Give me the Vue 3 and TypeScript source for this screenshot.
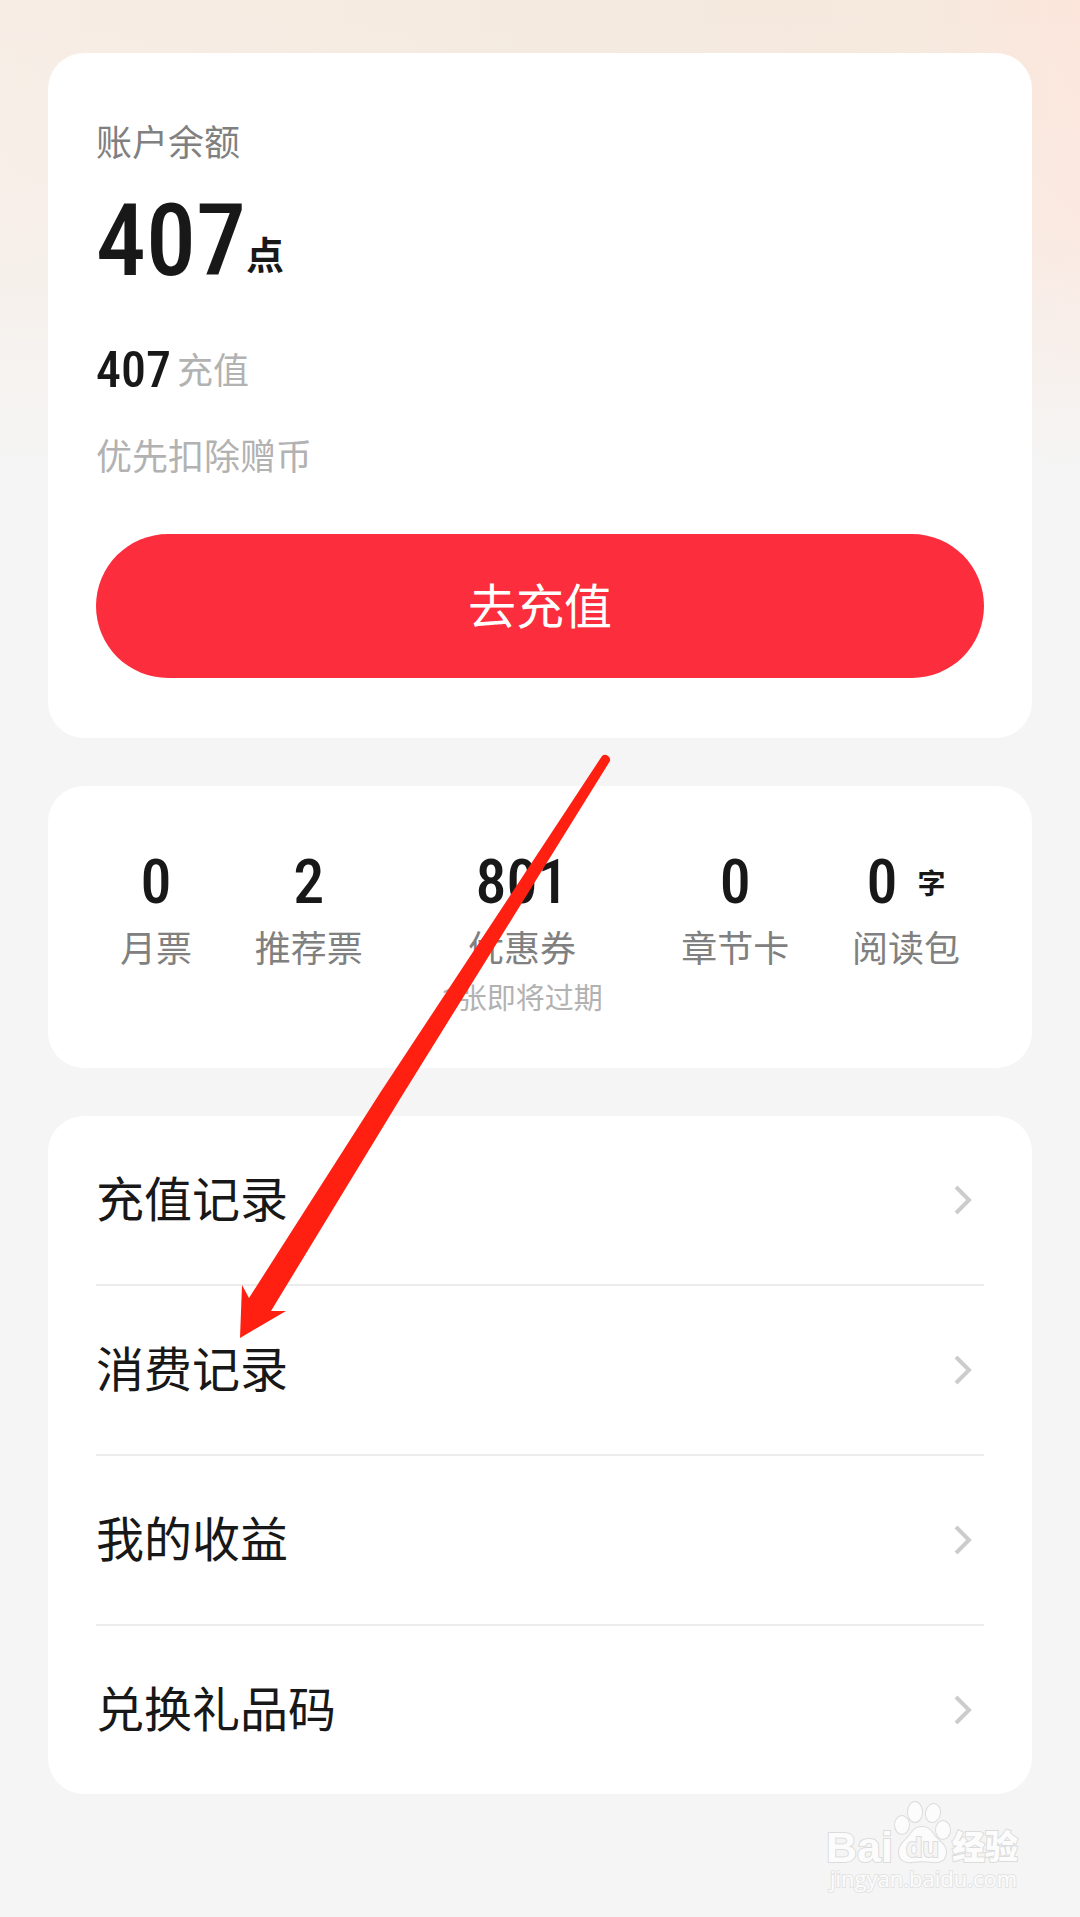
<script setup lang="ts">
interface Stat {
  value: string
  label: string
  unit?: string
  note?: string
}

const stats: Stat[] = [
  { value: '0', label: '月票' },
  { value: '2', label: '推荐票' },
  { value: '801', label: '优惠券', note: '1张即将过期' },
  { value: '0', label: '章节卡' },
  { value: '0', label: '阅读包', unit: '字' },
]

const links: string[] = ['充值记录', '消费记录', '我的收益', '兑换礼品码']
</script>

<template>
  <main class="page">
    <section class="card balance">
      <h1 class="caption">账户余额</h1>
      <p class="total"><span class="num">407</span><span class="unit">点</span></p>
      <p class="detail"><span class="num">407</span><span class="kind">充值</span></p>
      <p class="hint">优先扣除赠币</p>
      <button class="recharge" type="button">去充值</button>
    </section>

    <ul class="card stats">
      <li v-for="s in stats" :key="s.label" class="stat" :class="{ wide: s.note }">
        <span class="stat-value">
          <span class="num">{{ s.value }}</span>
          <span v-if="s.unit" class="stat-unit">{{ s.unit }}</span>
        </span>
        <span class="stat-label">{{ s.label }}</span>
        <span v-if="s.note" class="stat-note">{{ s.note }}</span>
      </li>
    </ul>

    <nav class="card menu">
      <a v-for="l in links" :key="l" class="row" href="#">
        <span class="row-label">{{ l }}</span>
        <svg class="chevron" viewBox="0 0 20 32" aria-hidden="true">
          <path d="M2 3 L15 16 L2 29" />
        </svg>
      </a>
    </nav>

    <svg class="watermark" viewBox="0 0 200 100" aria-label="Baidu 经验">
      <g class="shape">
        <ellipse cx="78" cy="27" rx="7" ry="9" />
        <ellipse cx="91" cy="14" rx="7" ry="10" />
        <ellipse cx="109" cy="15" rx="7" ry="9" transform="rotate(12 109 15)" />
        <ellipse cx="119" cy="32" rx="7" ry="9" />
        <path d="M98 29 C104 29 107 32 110 37 C114 43 122 46 122 54 C122 62 116 65 109 64 C102 63 95 63 88 64 C80 65 75 61 75 54 C75 46 82 42 86 37 C89 32 92 29 98 29 Z" />
      </g>
      <text class="brand" x="2" y="64">Bai</text>
      <text class="du" x="82" y="59">du</text>
      <text class="name" x="128" y="61">经验</text>
      <text class="site" x="6" y="89">jingyan.baidu.com</text>
    </svg>

    <svg class="arrow" viewBox="0 0 400 600" aria-hidden="true">
      <path d="M10 589 L12 536 L19 549 L150 344 L372 7 A5 5 0 0 1 380 12 L170 350 L41 562 L56 562 Z" />
    </svg>
  </main>
</template>

<style>
body {
  margin: 0;
  background: #f5f5f5;
}
</style>

<style scoped>
.page {
  position: relative;
  display: flex;
  flex-direction: column;
  gap: 48px;
  box-sizing: border-box;
  min-height: 100vh;
  padding: 53px 48px 16px;
  color: #181818;
  font-family: "Noto Sans CJK SC", sans-serif;
  background:
    linear-gradient(to bottom, rgba(245, 245, 245, 0) 0, rgba(245, 245, 245, 0.2) 220px, #f5f5f5 470px),
    linear-gradient(to right, #f7ede5, #f4eadf 50%, #f6e9dd 85%, #fce6dc);
}

.card {
  box-sizing: border-box;
  margin: 0;
  padding: 0 48px;
  border-radius: 36px;
  background: #fff;
}

.num {
  font-family: "Roboto Condensed", Roboto, sans-serif;
  font-weight: 500;
}

.balance {
  display: flex;
  flex-direction: column;
  padding-top: 59px;
  padding-bottom: 60px;
}

.caption,
.total,
.detail,
.hint {
  margin: 0;
  font-size: 36px;
  font-weight: 400;
  line-height: 56px;
}

.caption {
  color: #808080;
}

.total {
  display: flex;
  align-items: flex-end;
  margin-top: 13px;
}

.total .num {
  font-size: 100px;
  line-height: 120px;
}

.unit {
  font-size: 38px;
  font-weight: 700;
  line-height: 96px;
}

.detail {
  display: flex;
  align-items: flex-start;
  gap: 6px;
  margin-top: 39px;
}

.detail .num {
  font-size: 50px;
  line-height: 60px;
}

.kind,
.hint {
  color: #b2b2b2;
}

.hint {
  margin-top: 26px;
}

.recharge {
  height: 144px;
  margin-top: 52px;
  padding: 0 0 6px;
  border: 0;
  border-radius: 72px;
  background: #fc2e3d;
  color: #fff;
  font-family: inherit;
  font-size: 48px;
}

.stats {
  display: flex;
  justify-content: space-between;
  padding: 60px 72px 44px;
  list-style: none;
}

.stat {
  display: flex;
  flex-direction: column;
  align-items: center;
}

.wide {
  padding: 0 16px;
}

.stat-value {
  display: flex;
  align-items: center;
  gap: 20px;
  height: 72px;
  line-height: 72px;
}

.stat-value .num {
  font-size: 62px;
}

.stat-unit {
  font-size: 28px;
  font-weight: 700;
}

.stat-label {
  color: #808080;
  font-size: 36px;
  line-height: 56px;
}

.stat-note {
  color: #b2b2b2;
  font-family: Roboto, "Noto Sans CJK SC", sans-serif;
  font-size: 29px;
  line-height: 50px;
}

.menu {
  display: flex;
  flex-direction: column;
}

.row {
  display: flex;
  align-items: center;
  justify-content: space-between;
  height: 168px;
  color: inherit;
  font-size: 48px;
  text-decoration: none;
}

.row + .row {
  border-top: 2px solid #ececec;
}

.row-label {
  padding-bottom: 8px;
}

.chevron {
  width: 20px;
  height: 32px;
  margin-right: 10px;
  fill: none;
  stroke: #cccccc;
  stroke-width: 4;
}

.watermark {
  align-self: flex-end;
  width: 200px;
  height: 100px;
  margin: -44px 8px 0 0;
  overflow: visible;
}

.watermark .shape,
.watermark text {
  fill: #fcfcfc;
  stroke: #dcdcdc;
  stroke-width: 2;
  paint-order: stroke fill;
}

.brand {
  font: 700 43px "Liberation Sans", sans-serif;
}

.watermark .du {
  fill: #f5f5f5;
  font: 700 27px "Liberation Sans", sans-serif;
}

.name {
  font: 900 33px "Noto Sans CJK SC", sans-serif;
}

.watermark .site {
  stroke: #e4e4e4;
  font: 400 22px "Open Sans", sans-serif;
}

.arrow {
  position: absolute;
  top: 749px;
  left: 230px;
  width: 400px;
  height: 600px;
  fill: #ff2012;
  pointer-events: none;
}
</style>
